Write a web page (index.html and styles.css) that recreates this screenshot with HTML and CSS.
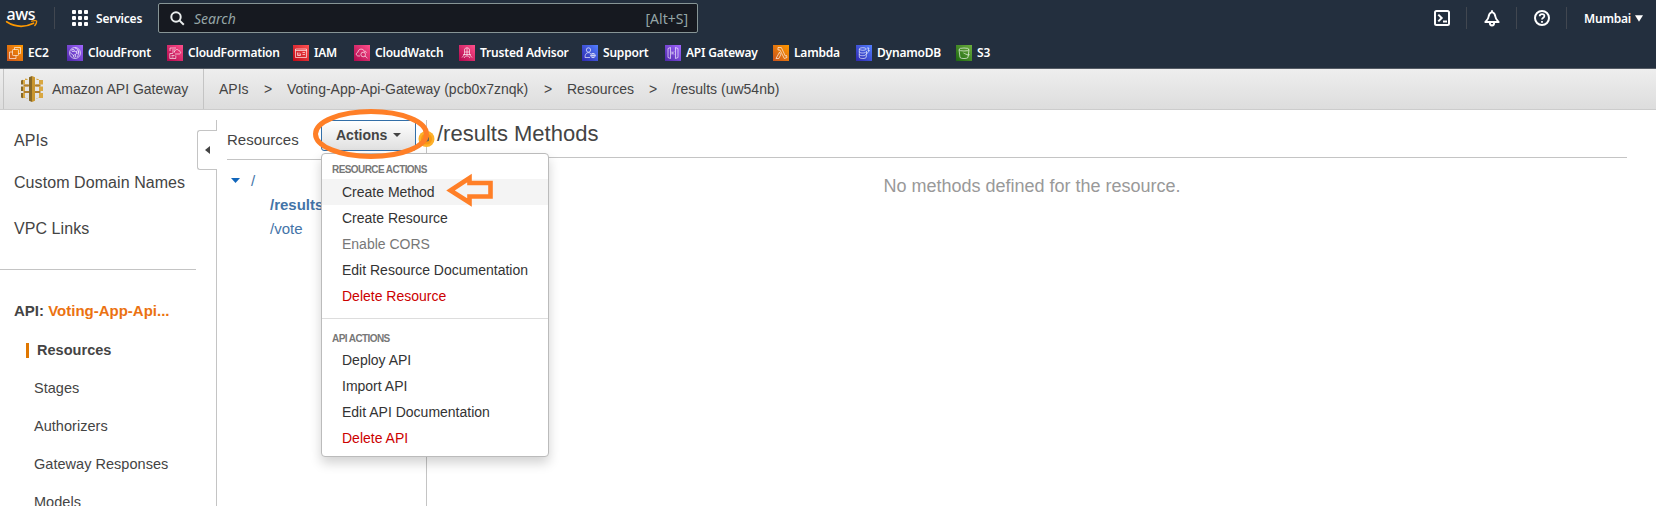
FILE: index.html
```html
<!DOCTYPE html>
<html lang="en">
<head>
<meta charset="utf-8">
<title>API Gateway</title>
<link rel="stylesheet" href="styles.css">
</head>
<body>
<svg width="0" height="0" class="defs">
  <defs>
    <linearGradient id="g-orange" x1="0" y1="1" x2="1" y2="0"><stop offset="0" stop-color="#c8511b"/><stop offset="1" stop-color="#ff9900"/></linearGradient>
    <linearGradient id="g-purple" x1="0" y1="1" x2="1" y2="0"><stop offset="0" stop-color="#4d27a8"/><stop offset="1" stop-color="#a166ff"/></linearGradient>
    <linearGradient id="g-pink" x1="0" y1="1" x2="1" y2="0"><stop offset="0" stop-color="#b0084d"/><stop offset="1" stop-color="#ff4f8b"/></linearGradient>
    <linearGradient id="g-red" x1="0" y1="1" x2="1" y2="0"><stop offset="0" stop-color="#bd0816"/><stop offset="1" stop-color="#ff5252"/></linearGradient>
    <linearGradient id="g-blue" x1="0" y1="1" x2="1" y2="0"><stop offset="0" stop-color="#2e27ad"/><stop offset="1" stop-color="#527fff"/></linearGradient>
    <linearGradient id="g-green" x1="0" y1="1" x2="1" y2="0"><stop offset="0" stop-color="#1b660f"/><stop offset="1" stop-color="#6cae3e"/></linearGradient>
  </defs>
</svg>

<header class="nav">
  <div class="nav-top">
    <svg class="logo" width="32" height="24" viewBox="0 0 32 24">
      <text class="logo-text" x="0.500" y="13.500" textLength="29">aws</text>
      <path d="M.6 15.800c8.500 5.400 18.500 5.600 27 1.400" fill="none" stroke="#f90" stroke-width="1.600" stroke-linecap="round"/>
      <path d="M25.800 15.200c2-.8 4.400-.7 4.700-.2.400.6-.3 3.200-1.700 4.600" fill="none" stroke="#f90" stroke-width="1.400" stroke-linecap="round"/>
    </svg>
    <span class="sep"></span>
    <div class="services">
      <svg width="16" height="16" viewBox="0 0 16 16" fill="#fff">
        <rect width="4" height="4" rx="1"/><rect x="6" width="4" height="4" rx="1"/><rect x="12" width="4" height="4" rx="1"/>
        <rect y="6" width="4" height="4" rx="1"/><rect x="6" y="6" width="4" height="4" rx="1"/><rect x="12" y="6" width="4" height="4" rx="1"/>
        <rect y="12" width="4" height="4" rx="1"/><rect x="6" y="12" width="4" height="4" rx="1"/><rect x="12" y="12" width="4" height="4" rx="1"/>
      </svg>
      <span>Services</span>
    </div>
    <div class="search">
      <svg width="15" height="15" viewBox="0 0 15 15" fill="none" stroke="#eaeded" stroke-width="2"><circle cx="6" cy="6" r="4.700"/><path d="M9.400 9.400l4.400 4.400"/></svg>
      <span class="search-hint">Search</span>
      <span class="search-key">[Alt+S]</span>
    </div>
    <div class="tools">
      <svg width="16" height="16" viewBox="0 0 16 16" fill="none" stroke="#fff" stroke-width="2"><rect x="1" y="1" width="14" height="14" rx="1.500"/><path d="M4.300 4.600L7.700 8l-3.400 3.400M9 11.500h4"/></svg>
      <span class="sep"></span>
      <svg width="16" height="17" viewBox="0 0 16 17" fill="none" stroke="#fff" stroke-width="1.900" stroke-linejoin="round"><path d="M8 1.800C6 2.600 4.800 4.300 4.500 7 4.200 9.500 2.500 10.500 1.300 12h13.400c-1.200-1.500-2.900-2.500-3.200-5C11.200 4.300 10 2.600 8 1.800zM8 2V.3M5.800 12.500c0 3.900 4.400 3.900 4.400 0"/></svg>
      <span class="sep"></span>
      <svg width="16" height="16" viewBox="0 0 16 16" fill="none" stroke="#fff" stroke-width="2"><circle cx="8" cy="8" r="7"/><path d="M5.700 6.300c0-3 4.700-2.900 4.700-.2C10.400 7.700 8 7.800 8 9.600M8 10.900v1.900" stroke-width="1.800"/></svg>
      <span class="sep"></span>
      <span class="region">Mumbai</span>
      <svg width="8" height="7" viewBox="0 0 8 7"><path d="M0 .3h8L4 6.700z" fill="#fff"/></svg>
    </div>
  </div>
  <nav class="favs">
    <a class="fav"><svg class="ico" viewBox="0 0 16 16"><rect width="16" height="16" fill="url(#g-orange)"/><rect x="5.500" y="4.500" width="6" height="6" rx=".8"/><path d="M7.500 4.500v-2h6v6h-2M5.500 7h-3v6.500H9v-3"/></svg>EC2</a>
    <a class="fav"><svg class="ico" viewBox="0 0 16 16"><rect width="16" height="16" fill="url(#g-purple)"/><circle cx="8" cy="8" r="5.500"/><circle cx="6" cy="5.500" r="1.200"/><circle cx="10.500" cy="7" r="1.200"/><circle cx="7.500" cy="11" r="1.200"/><path d="M3 7.500l3.500 3M7 6l2.500 1M9.800 8L8 10M8 3c4 1 5 5 2 9"/></svg>CloudFront</a>
    <a class="fav"><svg class="ico" viewBox="0 0 16 16"><rect width="16" height="16" fill="url(#g-pink)"/><path d="M6 8.500H2.800v5h6v-3M4.500 10.500h3M4.500 12h2M3 6V3h6M5 5h3M8 9h4.500c2-1 1-3-.5-3-.5-2-3.500-2-4 0L7 7M5 7h3"/></svg>CloudFormation</a>
    <a class="fav"><svg class="ico" viewBox="0 0 16 16"><rect width="16" height="16" fill="url(#g-red)"/><path d="M2.500 4h11v8.500h-11zM2.500 5.500h11M6 7.500v3M4.500 7.500v3h3v-2M9.500 7.500h2.500M9.500 9.500h2.500"/></svg>IAM</a>
    <a class="fav"><svg class="ico" viewBox="0 0 16 16"><rect width="16" height="16" fill="url(#g-pink)"/><path d="M6 11H4c-2.500-.5-2-3.500 0-3.800.3-4 5.500-4 6.300-.8 1.700-.6 2 .8 2 1.500"/><circle cx="9.200" cy="9.500" r="2.300"/><path d="M11 11l2.500 2.200"/></svg>CloudWatch</a>
    <a class="fav"><svg class="ico" viewBox="0 0 16 16"><rect width="16" height="16" fill="url(#g-pink)"/><path d="M5.500 9V5c0-3 5-3 5 0v4M8 3v9M5.500 7h5M3 12.500L6 9M13 12.500L10 9M5 13l2-2.500M11 13l-2-2.500M4 9.500h8"/></svg>Trusted Advisor</a>
    <a class="fav"><svg class="ico" viewBox="0 0 16 16"><rect width="16" height="16" fill="url(#g-blue)"/><circle cx="6.500" cy="5" r="2.200"/><path d="M8 12.500H3c0-6 5-5.500 6-3.500"/><circle cx="11" cy="10.500" r="2.200"/><path d="M11 8v5M8.500 10.500h5"/></svg>Support</a>
    <a class="fav"><svg class="ico" viewBox="0 0 16 16"><rect width="16" height="16" fill="url(#g-purple)"/><path d="M3 3.500l2.500-1v11l-2.500-1zM13 3.500l-2.500-1v11l2.500-1zM7 6.500v3M9 6.500L7.500 8 9 9.500"/></svg>API Gateway</a>
    <a class="fav"><svg class="ico" viewBox="0 0 16 16"><rect width="16" height="16" fill="url(#g-orange)"/><path d="M5 2.500h3.300l4 8.500 1.200-.5.500 2-2.700 1L7 5H5zM6.500 7.200l1.300 2.500-2 3.800H3z"/></svg>Lambda</a>
    <a class="fav"><svg class="ico" viewBox="0 0 16 16"><rect width="16" height="16" fill="url(#g-blue)"/><ellipse cx="6.800" cy="4" rx="3.500" ry="1.300"/><path d="M3.300 4v8c0 2 7 2 7 0V9M3.300 6.700c0 1.700 6 1.700 6.500.2M3.300 9.400c0 1.700 6.500 1.700 6.500 0M11 3h2l-1 2.500h1.500L10.500 9V6"/></svg>DynamoDB</a>
    <a class="fav"><svg class="ico" viewBox="0 0 16 16"><rect width="16" height="16" fill="url(#g-green)"/><ellipse cx="8" cy="4.500" rx="5" ry="1.500"/><path d="M3 4.500l1 8c1 1.400 7 1.400 8 0l1-8M7.500 8c2 1 6 3 6 1.500"/></svg>S3</a>
  </nav>
</header>

<div class="crumbs">
  <div class="product">
    <svg width="22" height="26" viewBox="0 0 22 26">
      <path d="M0 4.500l2-.7v4.700H0zM0 10.500h2V15H0zM0 17h2v5.300l-2-.7z" fill="#876929"/>
      <path d="M2 4h4.500V3L4 2.500v19l2.500 1.200V22H2v-5h5v-2H2v-4.500h5v-2H2zM20 4h-4.500V2.500L18 3.500v18l-2.500 1.200V22H22v-5h-7v-2h7v-4.500h-7v-2h7V4z" fill="#d9a741"/>
      <path d="M2.500 8.500H8v2H2.500zM14 8.500h5.500v2H14zM2.500 15H8v2H2.500zM14 15h5.500v2H14z" fill="#b07f2e"/>
      <path d="M8 1.200L11 0v26l-3-1.200z" fill="#876929"/><path d="M14 1.200L11 0v26l3-1.200z" fill="#c9962f"/>
    </svg>
    <span>Amazon API Gateway</span>
  </div>
  <div class="trail">
    <span class="c1">APIs</span><span class="gt">&gt;</span><span class="c2">Voting-App-Api-Gateway (pcb0x7znqk)</span><span class="gt">&gt;</span><span class="c3">Resources</span><span class="gt">&gt;</span><span>/results (uw54nb)</span>
  </div>
</div>

<div class="layout">
  <aside class="side">
    <ul class="side-main"><li>APIs</li><li>Custom Domain Names</li><li>VPC Links</li></ul>
    <div class="api-name">API: <span>Voting-App-Api...</span></div>
    <ul class="side-sub"><li class="current">Resources</li><li>Stages</li><li>Authorizers</li><li>Gateway Responses</li><li>Models</li></ul>
    <div class="collapse"><svg width="5" height="8" viewBox="0 0 5 8"><path d="M5 0v8L0 4z" fill="#444"/></svg></div>
  </aside>

  <section class="tree">
    <div class="tree-head">
      <span>Resources</span>
      <div class="actions">
        <button class="btn">Actions<svg width="8" height="4" viewBox="0 0 8 4"><path d="M0 0h8L4 4z" fill="#444"/></svg></button>
        <div class="menu">
          <div class="menu-title">RESOURCE ACTIONS</div>
          <div class="item hover">Create Method</div>
          <div class="item">Create Resource</div>
          <div class="item off">Enable CORS</div>
          <div class="item">Edit Resource Documentation</div>
          <div class="item danger">Delete Resource</div>
          <div class="rule"></div>
          <div class="menu-title second">API ACTIONS</div>
          <div class="item">Deploy API</div>
          <div class="item">Import API</div>
          <div class="item">Edit API Documentation</div>
          <div class="item danger">Delete API</div>
        </div>
      </div>
    </div>
    <div class="node root"><svg width="9" height="5" viewBox="0 0 9 5"><path d="M0 0h9L4.500 5z" fill="#1166bb"/></svg><span>/</span></div>
    <div class="node child"><b>/results</b></div>
    <div class="node child">/vote</div>
  </section>

  <main class="main">
    <h1>/results Methods</h1>
    <p>No methods defined for the resource.</p>
  </main>
</div>

<svg class="marks" width="200" height="110" viewBox="300 100 200 110">
  <circle cx="426.500" cy="139" r="8" fill="#fdb12b"/><circle cx="426.500" cy="139" r="5.500" fill="#f99a12"/>
  <path d="M426 137q3-1 3 1v3l-4 1q2-2 1-5z" fill="#6a6152"/>
  <ellipse cx="371" cy="134" rx="55.500" ry="22.500" fill="none" stroke="#ff7f27" stroke-width="5"/>
  <path d="M450.500 190.500l19-12.500v5h21v13.500h-21v6z" fill="none" stroke="#ff7f27" stroke-width="4.600"/>
</svg>
</body>
</html>
```

FILE: styles.css
```css
* { box-sizing: border-box; }
body { margin: 0; height: 506px; overflow: hidden; background: #fff; color: #444; font-family: "Liberation Sans", Arial, sans-serif; font-size: 14px; }
ul { list-style: none; margin: 0; padding: 0; }
svg { display: block; flex: none; }
.defs { position: absolute; }

.nav { height: 69px; background: #232f3e; border-bottom: 1px solid #545b64; color: #fff; font-family: "Noto Sans", "Open Sans", sans-serif; font-size: 12px; font-weight: 600; letter-spacing: -.2px; }
.nav-top { height: 36px; display: flex; align-items: center; padding: 0 13px 0 6px; }
.logo { width: 32px; margin-right: 16px; overflow: visible; }
.logo-text { font: 500 16px "Noto Sans", sans-serif; letter-spacing: 0; fill: #fff; }
.sep { width: 1px; height: 22px; background: #414750; flex: none; }
.services { display: flex; align-items: center; gap: 8px; width: 103px; padding-left: 17px; }
.search { width: 540px; height: 30px; display: flex; align-items: center; background: #161920; border: 1px solid #879596; border-radius: 2px; padding: 0 9px 0 11px; font-size: 14px; font-weight: 400; color: #95a5a6; letter-spacing: 0; }
.search-hint { font-style: italic; margin-left: 9px; flex: 1; font-size: 14px; }
.search-key { font-size: 14px; }
.tools { display: flex; align-items: center; margin-left: auto; }
.tools .sep { margin: 0 17px 0 16px; }
.tools .sep:nth-child(6) { margin-right: 17px; }
.region { width: 45px; margin-right: 6px; }
.favs { display: grid; grid-template-columns: 60px 100px 126px 61px 105px 123px 83px 108px 83px 100px 60px; padding-left: 7px; height: 32px; align-items: center; padding-top: 1px; }
.fav { display: flex; align-items: center; gap: 5px; white-space: nowrap; }
.ico { width: 16px; height: 16px; fill: none; stroke: rgba(255,255,255,.8); stroke-width: .8; }
.ico rect:first-child { stroke: none; }

.crumbs { height: 41px; display: flex; background: linear-gradient(#eee, #ddd); border-bottom: 1px solid #ccc; padding-left: 3px; white-space: nowrap; }
.product { display: flex; align-items: center; gap: 9px; width: 201px; padding-left: 17px; border: 1px solid #c4c4c4; border-width: 0 1px; }
.trail { display: flex; align-items: center; padding-left: 15px; }
.gt { width: 38px; text-align: center; }
.c1 { width: 30px; } .c2 { width: 242px; } .c3 { width: 67px; }

.layout { display: flex; height: 396px; }
.side { width: 217px; position: relative; }
.side::after { content: ""; position: absolute; right: 0; top: 10px; bottom: 0; width: 1px; background: #c4c4c4; }
.side-main { width: 196px; height: 160px; border-bottom: 1px solid #c4c4c4; padding: 21px 0 0 14px; font-size: 16px; letter-spacing: .07px; line-height: 20px; }
.side-main li:nth-child(2) { margin-top: 22px; }
.side-main li:nth-child(3) { margin-top: 26px; }
.api-name { margin: 31px 0 0 14px; line-height: 20px; font-weight: 700; font-size: 15px; }
.api-name span { color: #eb7211; }
.side-sub { padding: 10px 0 0 26px; font-size: 14.500px; }
.side-sub li { height: 38px; line-height: 38px; padding-left: 8px; letter-spacing: .03px; }
.side-sub .current { display: flex; align-items: center; font-weight: 700; padding: 0; }
.current::before { content: ""; width: 3px; height: 15px; background: #e07700; margin-right: 8px; }
.collapse { position: absolute; z-index: 1; left: 197px; top: 20px; width: 20px; height: 40px; background: #fff; border: 1px solid #c4c4c4; border-right: 0; border-radius: 3px 0 0 3px; display: flex; align-items: center; padding-left: 7px; }

.tree { width: 210px; margin-top: 10px; border-right: 1px solid #c4c4c4; padding: 0 10px; color: #4374a8; font-size: 15px; }
.tree-head { height: 40px; border-bottom: 1px solid #c4c4c4; display: flex; align-items: flex-start; color: #444; line-height: 40px; }
.tree-head > span { width: 72px; }
.actions { position: relative; margin-left: 22px; }
.btn { width: 95px; height: 31px; display: flex; align-items: center; gap: 6px; padding: 0 0 1px 14px; background: linear-gradient(#fff, #e0e0e0); border: 1px solid #336fa8; border-radius: 3px; color: #444; font: 700 14px "Liberation Sans", Arial, sans-serif; }
.menu { position: absolute; z-index: 2; left: 0; top: 33px; width: 228px; height: 304px; background: #fff; border: 1px solid #bbb; border-radius: 4px; box-shadow: 0 6px 12px rgba(0,0,0,.18); line-height: 26px; font-size: 14px; color: #333; }
.menu-title { height: 25px; padding: 3px 0 0 10px; font-size: 10px; font-weight: 700; letter-spacing: -.58px; color: #777; line-height: 26px; white-space: nowrap; }
.menu-title.second { height: 28px; padding-top: 7px; }
.item { height: 26px; padding-left: 20px; white-space: nowrap; }
.hover { background: #f4f4f4; }
.off { color: #777; }
.danger { color: #c00; }
.rule { height: 10px; border-bottom: 1px solid #ddd; }
.node { height: 24px; line-height: 24px; }
.root { display: flex; align-items: center; gap: 11px; padding-left: 4px; margin-top: 9px; }
.root svg { margin-bottom: 1px; }
.child { padding-left: 43px; }

.main { flex: 1; padding: 10px 29px 0 10px; }
h1 { margin: 0; height: 38px; font-size: 22px; font-weight: 400; line-height: 27px; border-bottom: 1px solid #c4c4c4; }
.main p { margin: 17px 0 0; text-align: center; font-size: 18px; line-height: 22px; color: #999; }

.marks { position: absolute; z-index: 3; left: 300px; top: 100px; }
```
